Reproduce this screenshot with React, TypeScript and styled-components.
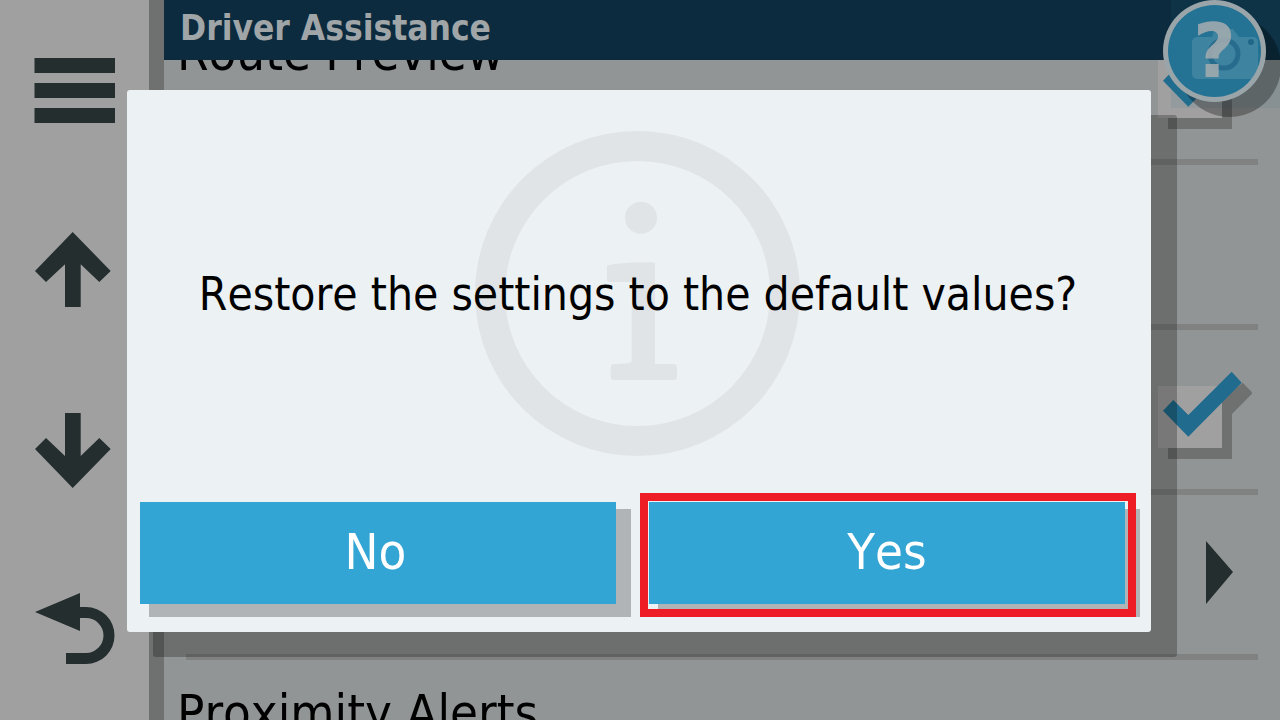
import React from "react";
import styled, { createGlobalStyle } from "styled-components";

const Global = createGlobalStyle`
  html, body { margin: 0; padding: 0; overflow: hidden; background: #929595; }
`;

const Screen = styled.div`
  position: relative;
  display: flex;
  width: 1280px;
  height: 720px;
  overflow: hidden;
  font-family: "DejaVu Sans Condensed", "DejaVu Sans", sans-serif;
  font-stretch: condensed;
  font-kerning: none;
`;

const Rail = styled.nav`
  flex: 0 0 149px;
  display: grid;
  grid-template-rows: repeat(4, 180px);
  background: #a0a0a0;
`;

const RailButton = styled.svg`
  display: block;
  width: 149px;
  height: 180px;
  fill: #242e2f;
`;

const Divider = styled.div`
  flex: 0 0 15px;
  background: #6f7070;
`;

const Main = styled.main`
  position: relative;
  flex: 1;
  min-width: 0;
  display: flex;
  flex-direction: column;
  background: #929595;
`;

const Header = styled.header`
  position: absolute;
  inset: 0 0 auto 0;
  height: 60px;
  box-sizing: border-box;
  padding: 0 0 4px 16px;
  display: flex;
  align-items: center;
  background: #0c2b3e;
  color: #a0a5a8;
  font-size: 35px;
  font-weight: 700;
`;

const Row = styled.section`
  flex: 0 0 165px;
  display: flex;
  flex-direction: column;
`;

const RowBody = styled.div`
  flex: 0 0 159px;
  display: flex;
  justify-content: space-between;
  align-items: flex-start;
  padding: 0 28px 0 13px;
`;

const RowLabel = styled.div`
  padding-top: 27px;
  font-size: 50.5px;
  line-height: 51px;
  color: #000;
  white-space: nowrap;
`;

const Separator = styled.div`
  flex: 0 0 6px;
  margin: 0 22px;
  background: #808282;
`;

const CheckIcon = styled.svg`
  flex: none;
  width: 100px;
  height: 90px;
  margin-top: 40px;
`;

const Chevron = styled.svg`
  flex: none;
  width: 27px;
  height: 63px;
  margin: 46px 19px 0 auto;
  fill: #242e2f;
`;

const CameraPatch = styled.div`
  position: absolute;
  top: 0;
  right: 0;
  width: 109px;
  height: 108px;
  background: rgba(35, 115, 149, 0.1);
`;

const HelpBall = styled.div`
  position: absolute;
  top: 0;
  left: 1163px;
  width: 103px;
  height: 102px;
  box-sizing: border-box;
  border: 5px solid #9aa5a9;
  border-radius: 50%;
  background: #247395;
  box-shadow: 15px 15px 0 rgba(0, 0, 0, 0.3);
  display: flex;
  align-items: center;
  justify-content: center;
  overflow: hidden;
`;

const HelpCamera = styled.svg`
  position: absolute;
  top: 23px;
  left: 24px;
  width: 66px;
  height: 52px;
`;

const HelpMark = styled.span`
  position: relative;
  font-family: "DejaVu Sans", sans-serif;
  font-stretch: normal;
  font-size: 74px;
  line-height: 1;
  font-weight: 700;
  color: rgba(160, 170, 174, 0.9);
`;

const Dialog = styled.div`
  position: absolute;
  top: 90px;
  left: 127px;
  width: 1024px;
  height: 542px;
  box-sizing: border-box;
  display: flex;
  flex-direction: column;
  padding: 0 26px 28px 13px;
  background: #ecf1f4;
  border-radius: 3px;
  box-shadow: 26px 25px 0 rgba(0, 0, 0, 0.25);
`;

const Watermark = styled.svg`
  position: absolute;
  top: 40px;
  left: 347px;
  width: 327px;
  height: 327px;
  fill: #e0e4e7;
`;

const Message = styled.div`
  position: relative;
  flex: 1;
  display: flex;
  align-items: center;
  justify-content: center;
  padding: 0 0 4px 11px;
  font-size: 45.75px;
  color: #000;
`;

const Buttons = styled.div`
  position: relative;
  display: grid;
  grid-template-columns: 476px 476px;
  column-gap: 33px;
`;

const ChoiceCell = styled.div<{ $focused?: boolean }>`
  position: relative;
  height: 102px;

  &::before {
    content: "";
    position: absolute;
    top: 7px;
    bottom: -13px;
    left: 9px;
    right: -15px;
    background: #b1b4b6;
  }

  &::after {
    content: "";
    display: ${(p) => (p.$focused ? "block" : "none")};
    position: absolute;
    top: -9px;
    bottom: -13px;
    left: -9px;
    right: -11px;
    border: 8px solid #ee1c25;
  }
`;

const Choice = styled.button<{ $inset?: number }>`
  position: relative;
  display: block;
  width: 100%;
  height: 100%;
  padding: 0 ${(p) => p.$inset ?? 0}px 4px 0;
  border: 0;
  background: #32a5d4;
  color: #fff;
  font-family: inherit;
  font-stretch: inherit;
  font-kerning: inherit;
  font-size: 50.5px;
`;

const Check = () => (
  <CheckIcon viewBox="0 0 100 90">
    <path fill="#6f7070" d="M16 26h64v63H16z" />
    <path fill="#6f7070" d="M90.700 12.700 100.700 23 80 44H70V30z" />
    <path fill="#a0a0a0" d="M6 16h64v62H6z" />
    <path fill="#216c8e" d="M79.700 1.700 89.700 12.700 36.300 66.700 11 40.700 21.300 30 36.300 45z" />
  </CheckIcon>
);

export default function App() {
  return (
    <Screen>
      <Global />
      <Rail>
        <RailButton viewBox="0 0 149 180">
          <path d="M34.500 58h80.500v15H34.500zM34.500 83h80.500v15H34.500zM34.500 108h80.500v15H34.500z" />
        </RailButton>
        <RailButton viewBox="0 180 149 180">
          <path d="M72.700 232 110.700 271 99.300 282 80.700 264.300V307H65V264.300L46 282 35 271z" />
        </RailButton>
        <RailButton viewBox="0 360 149 180">
          <path d="M65 413H80.700V456L99.300 438 110.700 449 72.700 488 35 449 46 438 65 456z" />
        </RailButton>
        <RailButton viewBox="0 540 149 180">
          <path d="M35 612 80 593V607H86A28.500 28.500 0 0 1 86 664H66V653H86A17.500 17.500 0 0 0 86 618H80V631z" />
        </RailButton>
      </Rail>
      <Divider />
      <Main>
        <Row>
          <RowBody>
            <RowLabel>Route Preview</RowLabel>
            <Check />
          </RowBody>
          <Separator />
        </Row>
        <Row>
          <RowBody />
          <Separator />
        </Row>
        <Row>
          <RowBody>
            <span />
            <Check />
          </RowBody>
          <Separator />
        </Row>
        <Row>
          <RowBody>
            <Chevron viewBox="0 0 27 63">
              <path d="M0 0 27 31 0 63z" />
            </Chevron>
          </RowBody>
          <Separator />
        </Row>
        <Row>
          <RowBody>
            <RowLabel>Proximity Alerts</RowLabel>
          </RowBody>
        </Row>
        <Header>Driver Assistance</Header>
        <CameraPatch />
      </Main>
      <HelpBall>
        <HelpCamera viewBox="0 0 66 52">
          <path
            fill="rgba(255,255,255,0.12)"
            d="M5 9H20L23 1H41L47 9H61A5 5 0 0 1 66 14V46A5 5 0 0 1 61 51H5A5 5 0 0 1 0 46V14A5 5 0 0 1 5 9z"
          />
          <circle cx="32" cy="26" r="14" fill="none" stroke="rgba(20,90,125,0.55)" strokeWidth="5" />
          <circle cx="59" cy="14" r="3" fill="rgba(20,90,125,0.7)" />
        </HelpCamera>
        <HelpMark>?</HelpMark>
      </HelpBall>
      <Dialog>
        <Watermark viewBox="0 0 327 327">
          <path
            fillRule="evenodd"
            d="M163.500 1a162.500 162.500 0 1 0 0 325a162.500 162.500 0 1 0 0-325zM163.500 31a132.500 132.500 0 1 1 0 265a132.500 132.500 0 1 1 0-265z"
          />
          <circle cx="167" cy="87.700" r="16" />
          <path d="M133 135.700 C140 133 165 132.300 178 132.300 C180 132.300 181 133 181 135V234H199C202 234 203 235 203 238V246C203 249 202 250 199 250H140C137.500 250 136.700 249 136.700 246V238C136.700 235 137.500 234.300 140 234C150 233.700 157.700 233.700 157.700 231V152H136C134 152 133 151 133 149z" />
        </Watermark>
        <Message>Restore the settings to the default values?</Message>
        <Buttons>
          <ChoiceCell>
            <Choice $inset={5}>No</Choice>
          </ChoiceCell>
          <ChoiceCell $focused>
            <Choice>Yes</Choice>
          </ChoiceCell>
        </Buttons>
      </Dialog>
    </Screen>
  );
}
